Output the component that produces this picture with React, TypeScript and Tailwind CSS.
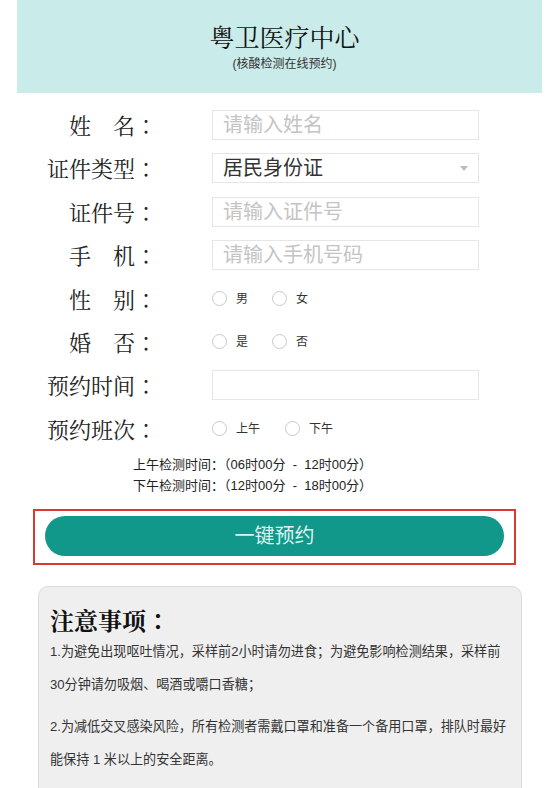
const serif = { fontFamily: '"Noto Serif CJK SC", "Noto Sans CJK SC", serif' };
const serifTc = { fontFamily: '"Noto Serif CJK TC", "Noto Sans CJK TC", serif' };
const sans = { fontFamily: '"Liberation Sans", "Noto Sans CJK SC", sans-serif' };

function Colon() {
  return <span style={serifTc}>：</span>;
}

function Label({ text }: { text: string }) {
  return (
    <div className="w-[157px] shrink-0 text-right text-[22px] leading-[30px] text-[#222]" style={serif}>
      {text}
      <Colon />
    </div>
  );
}

function Radio({ label, className = '' }: { label: string; className?: string }) {
  return (
    <label className={`flex items-center gap-[9px] ${className}`}>
      <span className="w-[15px] h-[15px] rounded-full border-[1.5px] border-[#c9c9c9] bg-white" />
      <span className="text-[12px] text-[#333]">{label}</span>
    </label>
  );
}

function TextInput({ placeholder }: { placeholder?: string }) {
  return (
    <div className="ml-[55px] w-[267px] h-[30px] border border-[#e6e6e6] bg-white flex items-center pl-[10px] text-[20px] text-[#c4c4c4]">
      {placeholder}
    </div>
  );
}

export default function App() {
  return (
    <div className="w-[550px] h-[788px] overflow-hidden bg-white" style={sans}>
      {/* Header */}
      <div className="ml-[17px] w-[525px] h-[93px] bg-[#c9ebe9] flex flex-col items-center pt-[20px]">
        <h1 className="text-[25px] leading-[32px] text-[#111] pl-[10px]" style={serif}>
          粤卫医疗中心
        </h1>
        <p className="mt-[4px] text-[12px] leading-[16px] text-[#333] pl-[10px]">(核酸检测在线预约)</p>
      </div>

      {/* Form */}
      <div className="mt-[17px] flex flex-col gap-[13.4px]">
        <div className="flex items-center h-[30px]">
          <Label text="姓　名" />
          <TextInput placeholder="请输入姓名" />
        </div>
        <div className="flex items-center h-[30px]">
          <Label text="证件类型" />
          <div className="ml-[55px] w-[267px] h-[30px] border border-[#e6e6e6] bg-white flex items-center justify-between pl-[10px] pr-[10px] text-[20px] text-[#333]">
            <span>居民身份证</span>
            <span className="w-0 h-0 border-l-[4px] border-r-[4px] border-t-[5px] border-l-transparent border-r-transparent border-t-[#bdbdbd]" />
          </div>
        </div>
        <div className="flex items-center h-[30px]">
          <Label text="证件号" />
          <TextInput placeholder="请输入证件号" />
        </div>
        <div className="flex items-center h-[30px]">
          <Label text="手　机" />
          <TextInput placeholder="请输入手机号码" />
        </div>
        <div className="flex items-center h-[30px]">
          <Label text="性　别" />
          <div className="ml-[55px] flex items-center">
            <Radio label="男" />
            <Radio label="女" className="ml-[24px]" />
          </div>
        </div>
        <div className="flex items-center h-[30px]">
          <Label text="婚　否" />
          <div className="ml-[55px] flex items-center">
            <Radio label="是" />
            <Radio label="否" className="ml-[24px]" />
          </div>
        </div>
        <div className="flex items-center h-[30px]">
          <Label text="预约时间" />
          <TextInput />
        </div>
        <div className="flex items-center h-[30px]">
          <Label text="预约班次" />
          <div className="ml-[55px] flex items-center">
            <Radio label="上午" />
            <Radio label="下午" className="ml-[25px]" />
          </div>
        </div>
      </div>

      {/* Time info */}
      <div className="mt-[10px] pl-[133px] text-[13px] leading-[21px] text-[#222] whitespace-pre">
        <p>上午检测时间：（06时00分  -  12时00分）</p>
        <p>下午检测时间：（12时00分  -  18时00分）</p>
      </div>

      {/* Submit */}
      <div className="mt-[13px] ml-[33px] w-[483px] h-[56px] border-2 border-[#d63a31] px-[10px] pt-[5px]">
        <button className="w-full h-[40px] rounded-full bg-[#11988a] text-[20px] text-[#dff2ef]">
          一键预约
        </button>
      </div>

      {/* Notice */}
      <div className="mt-[21px] ml-[38px] w-[484px] h-[220px] rounded-t-[10px] border border-[#dcdcdc] bg-[#efefef] px-[11px] pt-[18px]">
        <h2 className="text-[24px] leading-[30px] font-bold text-[#111]" style={serif}>
          注意事项
          <Colon />
        </h2>
        <p className="text-[13.1px] leading-[33px] text-[#333] whitespace-nowrap">
          1.为避免出现呕吐情况，采样前2小时请勿进食；为避免影响检测结果，采样前
          <br />
          30分钟请勿吸烟、喝酒或嚼口香糖；
        </p>
        <p className="mt-[9px] text-[13.1px] leading-[33px] text-[#333] whitespace-nowrap">
          2.为减低交叉感染风险，所有检测者需戴口罩和准备一个备用口罩，排队时最好
          <br />
          能保持 1 米以上的安全距离。
        </p>
      </div>
    </div>
  );
}
